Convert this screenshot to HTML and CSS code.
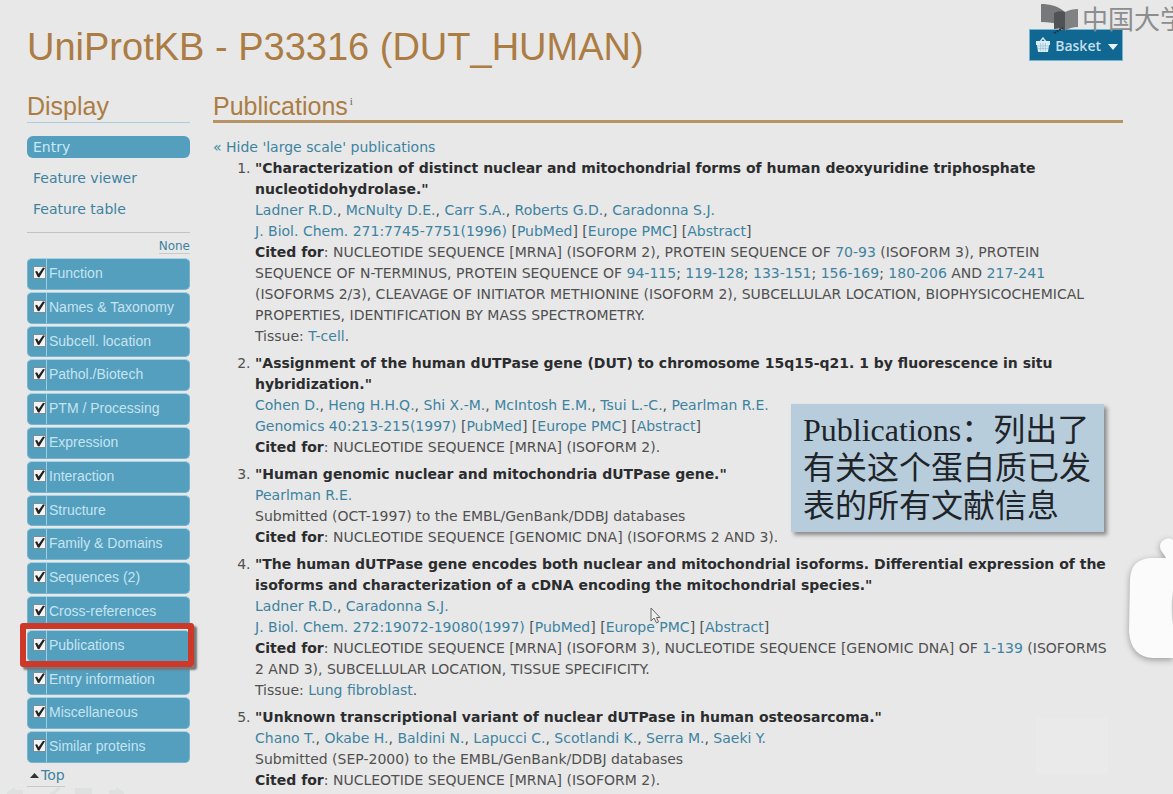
FILE: index.html
```html
<!DOCTYPE html>
<html lang="en">
<head>
<meta charset="utf-8">
<title>UniProtKB - P33316 (DUT_HUMAN)</title>
<link rel="stylesheet" href="styles.css">
</head>
<body>
<div class="page">
  <header class="header">
    <h1 class="title">UniProtKB - P33316 (DUT_HUMAN)</h1>
    <button class="basket" type="button">
      <svg class="basket-icon" width="16" height="16" viewBox="0 0 16 16" aria-hidden="true">
        <path d="M4 6 8 1l4 5" fill="none" stroke="#cfe6f0" stroke-width="1.4"/>
        <path d="M1 4h14v4h-1l-1 7H3L2 8H1z" fill="#d9edf5"/>
        <path d="M5.500 6v8M8 6v8M10.500 6v8M3 9h10M3 11.500h10" stroke="#8db9cd" stroke-width=".6"/>
      </svg>
      <span>Basket</span>
      <svg class="caret" width="10" height="6" viewBox="0 0 10 6" aria-hidden="true"><path d="M0 0h10L5 6z" fill="#e6f4fa"/></svg>
    </button>
  </header>

  <div class="columns">
    <aside class="sidebar">
      <h2 class="side-title">Display</h2>
      <nav class="views">
        <a class="view view-active" href="#">Entry</a>
        <a class="view" href="#">Feature viewer</a>
        <a class="view" href="#">Feature table</a>
      </nav>
      <div class="none-row"><a class="none" href="#">None</a></div>
      <ul class="sections">
        <li class="section"><input class="tick" type="checkbox" checked aria-label="Show Function"><a class="section-link" href="#">Function</a></li>
        <li class="section"><input class="tick" type="checkbox" checked aria-label="Show Names &amp; Taxonomy"><a class="section-link" href="#">Names &amp; Taxonomy</a></li>
        <li class="section"><input class="tick" type="checkbox" checked aria-label="Show Subcell. location"><a class="section-link" href="#">Subcell. location</a></li>
        <li class="section"><input class="tick" type="checkbox" checked aria-label="Show Pathol./Biotech"><a class="section-link" href="#">Pathol./Biotech</a></li>
        <li class="section"><input class="tick" type="checkbox" checked aria-label="Show PTM / Processing"><a class="section-link" href="#">PTM / Processing</a></li>
        <li class="section"><input class="tick" type="checkbox" checked aria-label="Show Expression"><a class="section-link" href="#">Expression</a></li>
        <li class="section"><input class="tick" type="checkbox" checked aria-label="Show Interaction"><a class="section-link" href="#">Interaction</a></li>
        <li class="section"><input class="tick" type="checkbox" checked aria-label="Show Structure"><a class="section-link" href="#">Structure</a></li>
        <li class="section"><input class="tick" type="checkbox" checked aria-label="Show Family &amp; Domains"><a class="section-link" href="#">Family &amp; Domains</a></li>
        <li class="section"><input class="tick" type="checkbox" checked aria-label="Show Sequences"><a class="section-link" href="#">Sequences (2)</a></li>
        <li class="section"><input class="tick" type="checkbox" checked aria-label="Show Cross-references"><a class="section-link" href="#">Cross-references</a></li>
        <li class="section section-marked"><input class="tick" type="checkbox" checked aria-label="Show Publications"><a class="section-link" href="#">Publications</a></li>
        <li class="section"><input class="tick" type="checkbox" checked aria-label="Show Entry information"><a class="section-link" href="#">Entry information</a></li>
        <li class="section"><input class="tick" type="checkbox" checked aria-label="Show Miscellaneous"><a class="section-link" href="#">Miscellaneous</a></li>
        <li class="section"><input class="tick" type="checkbox" checked aria-label="Show Similar proteins"><a class="section-link" href="#">Similar proteins</a></li>
      </ul>
      <a class="top" href="#"><svg width="9" height="5" viewBox="0 0 9 5" aria-hidden="true"><path d="M0 5h9L4.500 0z" fill="#333"/></svg>Top</a>
    </aside>

    <main class="main">
      <h2 class="main-title">Publications<sup class="info">i</sup></h2>
      <a class="toggle" href="#">« Hide 'large scale' publications</a>
      <ol class="papers">
        <li class="paper">
          <b>"Characterization of distinct nuclear and mitochondrial forms of human deoxyuridine triphosphate<br>nucleotidohydrolase."</b><br>
          <a href="#">Ladner R.D.</a>, <a href="#">McNulty D.E.</a>, <a href="#">Carr S.A.</a>, <a href="#">Roberts G.D.</a>, <a href="#">Caradonna S.J.</a><br>
          <a href="#">J. Biol. Chem. 271:7745-7751(1996)</a> [<a href="#">PubMed</a>] [<a href="#">Europe PMC</a>] [<a href="#">Abstract</a>]<br>
          <b>Cited for</b>: NUCLEOTIDE SEQUENCE [MRNA] (ISOFORM 2), PROTEIN SEQUENCE OF <a href="#">70-93</a> (ISOFORM 3), PROTEIN<br>SEQUENCE OF N-TERMINUS, PROTEIN SEQUENCE OF <a href="#">94-115</a>; <a href="#">119-128</a>; <a href="#">133-151</a>; <a href="#">156-169</a>; <a href="#">180-206</a> AND <a href="#">217-241</a><br>(ISOFORMS 2/3), CLEAVAGE OF INITIATOR METHIONINE (ISOFORM 2), SUBCELLULAR LOCATION, BIOPHYSICOCHEMICAL<br>PROPERTIES, IDENTIFICATION BY MASS SPECTROMETRY.<br>
          Tissue: <a href="#">T-cell</a>.
        </li>
        <li class="paper">
          <b>"Assignment of the human dUTPase gene (DUT) to chromosome 15q15-q21. 1 by fluorescence in situ<br>hybridization."</b><br>
          <a href="#">Cohen D.</a>, <a href="#">Heng H.H.Q.</a>, <a href="#">Shi X.-M.</a>, <a href="#">McIntosh E.M.</a>, <a href="#">Tsui L.-C.</a>, <a href="#">Pearlman R.E.</a><br>
          <a href="#">Genomics 40:213-215(1997)</a> [<a href="#">PubMed</a>] [<a href="#">Europe PMC</a>] [<a href="#">Abstract</a>]<br>
          <b>Cited for</b>: NUCLEOTIDE SEQUENCE [MRNA] (ISOFORM 2).
        </li>
        <li class="paper">
          <b>"Human genomic nuclear and mitochondria dUTPase gene."</b><br>
          <a href="#">Pearlman R.E.</a><br>
          Submitted (OCT-1997) to the EMBL/GenBank/DDBJ databases<br>
          <b>Cited for</b>: NUCLEOTIDE SEQUENCE [GENOMIC DNA] (ISOFORMS 2 AND 3).
        </li>
        <li class="paper">
          <b>"The human dUTPase gene encodes both nuclear and mitochondrial isoforms. Differential expression of the<br>isoforms and characterization of a cDNA encoding the mitochondrial species."</b><br>
          <a href="#">Ladner R.D.</a>, <a href="#">Caradonna S.J.</a><br>
          <a href="#">J. Biol. Chem. 272:19072-19080(1997)</a> [<a href="#">PubMed</a>] [<a href="#">Europe PMC</a>] [<a href="#">Abstract</a>]<br>
          <b>Cited for</b>: NUCLEOTIDE SEQUENCE [MRNA] (ISOFORM 3), NUCLEOTIDE SEQUENCE [GENOMIC DNA] OF <a href="#">1-139</a> (ISOFORMS<br>2 AND 3), SUBCELLULAR LOCATION, TISSUE SPECIFICITY.<br>
          Tissue: <a href="#">Lung fibroblast</a>.
        </li>
        <li class="paper">
          <b>"Unknown transcriptional variant of nuclear dUTPase in human osteosarcoma."</b><br>
          <a href="#">Chano T.</a>, <a href="#">Okabe H.</a>, <a href="#">Baldini N.</a>, <a href="#">Lapucci C.</a>, <a href="#">Scotlandi K.</a>, <a href="#">Serra M.</a>, <a href="#">Saeki Y.</a><br>
          Submitted (SEP-2000) to the EMBL/GenBank/DDBJ databases<br>
          <b>Cited for</b>: NUCLEOTIDE SEQUENCE [MRNA] (ISOFORM 2).
        </li>
      </ol>
    </main>
  </div>

  <div class="watermark" lang="zh">
    <svg width="38" height="34" viewBox="0 0 38 34" aria-hidden="true">
      <path d="M1 1c9 0 17 2 24 8v15C17 20 9 19 1 19z" fill="#77787a"/>
      <path d="M25 9c4-2 8-3 13-3v18c-5 0-9 1-13 4z" fill="#808183"/>
      <path d="M14 10c4-2 8-2 11-1v19c-3-3-7-3-11-2z" fill="#505356"/>
      <path d="M14 30l9-5" stroke="#1c3440" stroke-width="2" stroke-dasharray="2 1"/>
    </svg>
    <span>中国大学</span>
  </div>
  <div class="callout" lang="zh">Publications：列出了有关这个蛋白质已发表的所有文献信息</div>
  <svg class="mascot" width="51" height="134" viewBox="0 0 51 134" aria-hidden="true">
    <path d="M51 3C45-1 38 4 38 9s3 6 6 12H29Q9 22 8 42L7 95q2 25 24 26h20z" fill="#fbfbfb"/>
    <path d="M51 54v34q-3-17 0-34z" fill="#d0d0d0"/>
  </svg>
  <svg class="pointer" width="12" height="18" viewBox="0 0 12 18" aria-hidden="true"><path d="M1 1v13l3-3 2.500 5 2-1L6.500 10.500H10z" fill="#eee" stroke="#666"/></svg>
  <svg class="slide-controls" width="120" height="8" viewBox="0 0 120 8" aria-hidden="true">
    <path d="M0 6l8-5v3h8v4H0zM42 8l9-7 3 2-6 5zM68 2h17v6H68zM117 6l-8-5v3h-7v4h15z" fill="#dfe1e1"/>
  </svg>
  <div class="patch"></div>
</div>
</body>
</html>
```
FILE: styles.css
```css
* { box-sizing: border-box; }
body {
  margin: 0;
  background: #e8e8e8;
  color: #505050;
  font: 14px/21px "DejaVu Sans", sans-serif;
  overflow: hidden;
}
a { color: #3d83a0; text-decoration: none; }
b { color: #2b2c2e; }
.page { position: relative; height: 100vh; padding: 24px 50px 0 27px; overflow: hidden; }
.header { display: flex; justify-content: space-between; align-items: flex-start; }
.title, .side-title, .main-title {
  margin: 0;
  color: #ab7c43;
  font-family: "Liberation Sans", Arial, sans-serif;
  font-weight: 400;
}
.title { font-size: 38px; line-height: 46px; }
.basket {
  display: flex;
  align-items: center;
  gap: 4px;
  height: 32px;
  margin-top: 5px;
  padding: 0 4px 0 5px;
  border: 1px solid #75b4cf;
  background: #0f6792;
  color: #c3dfeb;
  font: 600 14px "Open Sans", sans-serif;
}
.basket span { margin-right: 3px; }
.caret { margin-top: 4px; }
.columns { display: flex; gap: 23px; margin-top: 20px; }
.sidebar { flex: 0 0 163px; }
.side-title, .main-title { font-size: 25px; line-height: 33px; }
.side-title { height: 33px; border-bottom: 1px solid #a9cfdd; }
.main-title { height: 33px; border-bottom: 3px solid #b79466; }
.info { margin-left: 2px; font: 11px/11px "Liberation Serif", serif; color: #666; vertical-align: 10px; }
.views { display: flex; flex-direction: column; gap: 9px; margin-top: 13px; padding-bottom: 12px; border-bottom: 1px solid #bcc4c7; }
.view { padding-left: 6px; line-height: 22px; }
.view-active { border-radius: 6px; background: #549ebe; color: #c9e9f5; }
.none-row { height: 25px; padding-top: 2px; text-align: right; }
.none { font-size: 12px; border-bottom: 1px solid #c2cbcf; }
.sections { display: grid; grid-auto-rows: 1fr; gap: 2px; min-height: 505px; margin: 0; padding: 0; list-style: none; }
.section {
  position: relative;
  display: flex;
  padding-left: 5px;
  border: 1px solid #78b4cd;
  border-top-color: #a5d3e4;
  border-radius: 5px;
  background: #549ebe;
}
.tick {
  appearance: none;
  width: 13px;
  height: 13px;
  margin: 7px 0 0;
  border: 1px solid #7b8f98;
  background: #f1f3f4;
}
.tick:checked::after {
  content: "";
  display: block;
  height: 11px;
  background: #222;
  clip-path: polygon(10% 42%, 28% 36%, 42% 62%, 82% 5%, 100% 10%, 48% 95%, 34% 92%);
}
.section-link {
  flex: 1;
  padding-left: 2px;
  border-left: 1px solid #9ccfe2;
  color: #c5e5f1;
  font: 14px/29px "Liberation Sans", Arial, sans-serif;
}
.section-marked { z-index: 1; }
.section-marked::after {
  content: "";
  position: absolute;
  inset: -8px -5px -6px -8px;
  border: 6px solid #cd3829;
  border-radius: 3px;
  box-shadow: 3px 3px 2px #777;
}
.top { display: inline-flex; align-items: center; gap: 2px; padding-left: 3px; border-bottom: 1px solid #c5cacc; }
.main { flex: 1; min-width: 0; }
.toggle { display: block; margin-top: 14px; }
.papers { margin: 0; padding: 0 0 0 42px; white-space: nowrap; }
.paper { margin-bottom: 6px; }
.watermark {
  position: absolute;
  top: 3px;
  left: calc(100% - 133px);
  display: flex;
  gap: 4px;
  color: #8b8d8f;
  font: 400 26px/30px "Noto Sans CJK SC", sans-serif;
  white-space: nowrap;
}
.callout {
  position: absolute;
  top: 404px;
  right: 69px;
  width: 313px;
  padding: 7px 12px;
  background: #b8cddb;
  box-shadow: 3px 3px 4px #8a8a8a;
  color: #202429;
  font: 32px/38px "Liberation Serif", "Noto Sans CJK SC", serif;
}
.mascot { position: absolute; top: 537px; right: 0; filter: drop-shadow(0 2px 3px #999); }
.pointer { position: absolute; top: 607px; left: 650px; }
.slide-controls { position: absolute; bottom: 0; left: 7px; }
.patch { position: absolute; right: 65px; bottom: 20px; width: 72px; height: 56px; background: #eaeaea; }
```
